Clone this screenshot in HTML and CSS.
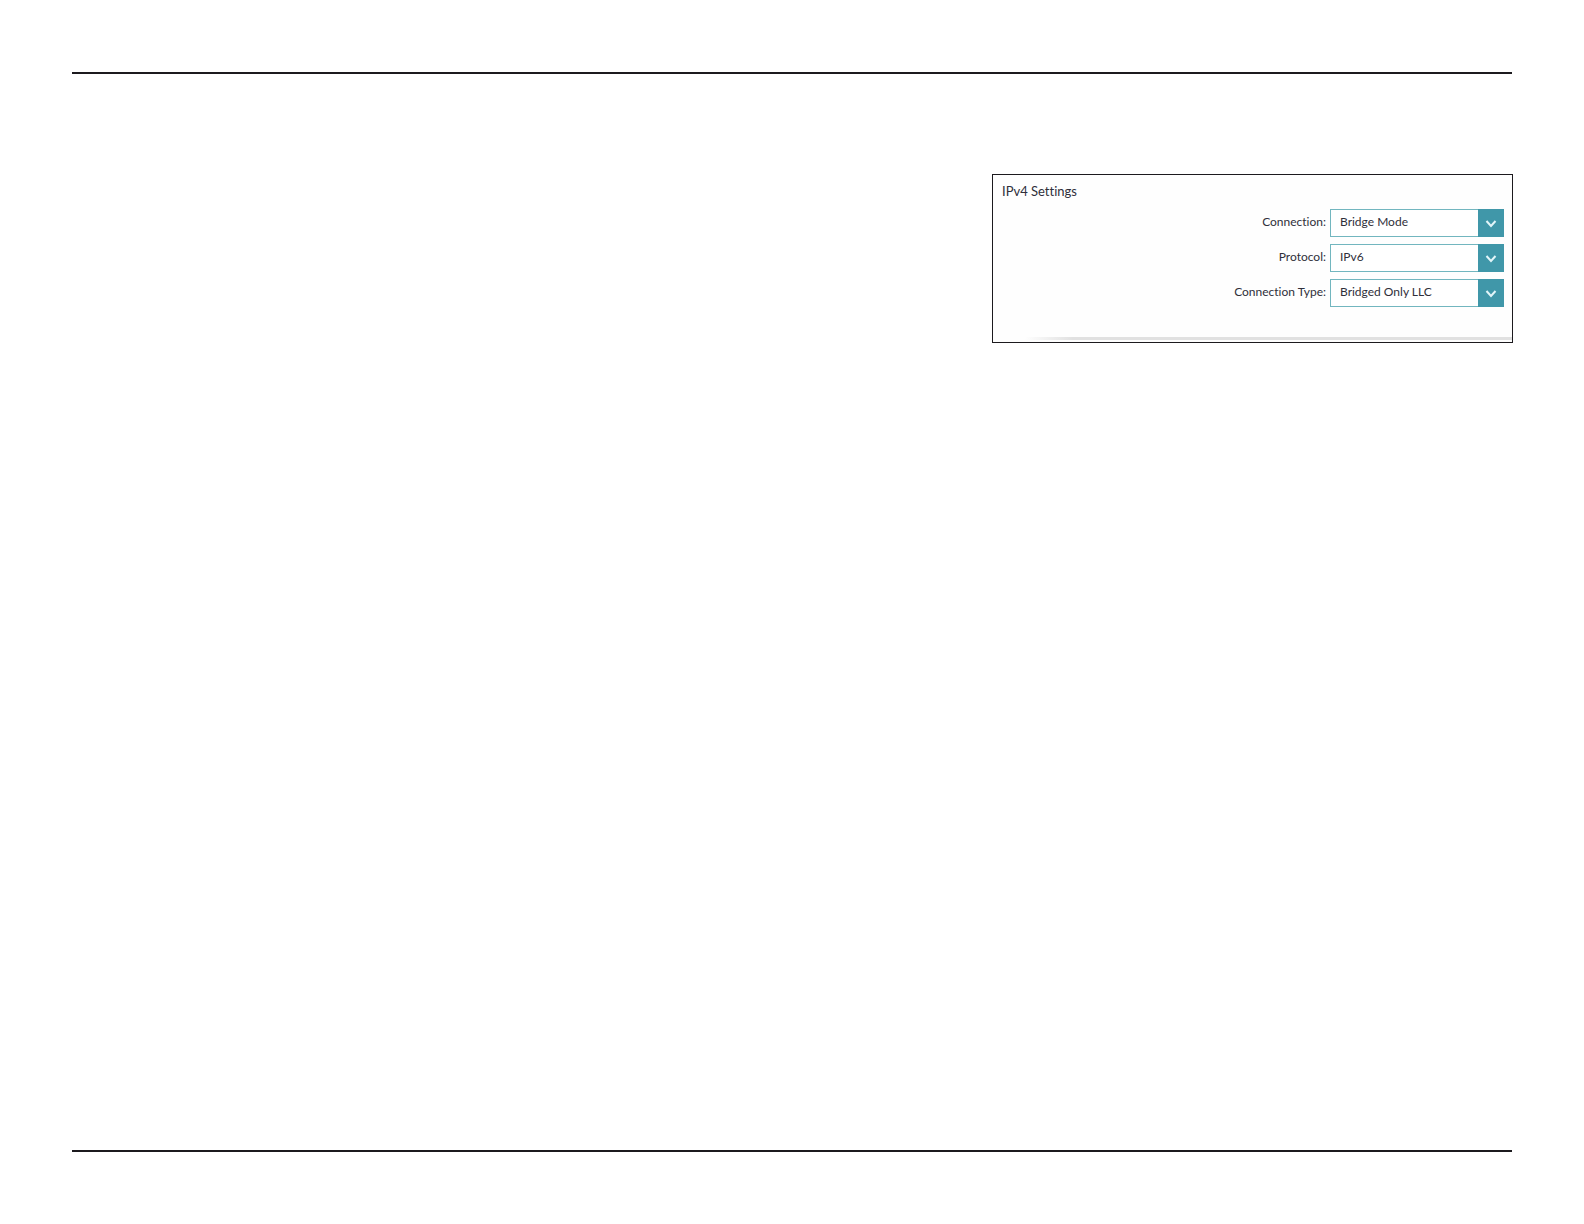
FILE: index.html
```html
<!DOCTYPE html>
<html lang="en">

<head>
    <meta charset="UTF-8">
    <meta name="viewport" content="width=device-width, initial-scale=1.0">
    <title>IPv4 Settings</title>
    <link rel="stylesheet" href="styles.css">
</head>

<body>
    <main class="page">
        <form class="panel">
            <h1 class="panel-title">IPv4 Settings</h1>
            <div class="fields">
                <div class="field">
                    <label for="connection">Connection:</label>
                    <div class="dropdown">
                        <select id="connection">
                            <option>Bridge Mode</option>
                        </select>
                        <svg class="arrow" viewBox="0 0 26 28"><path d="M8.5 12 L13 17 L17.5 12" /></svg>
                    </div>
                </div>
                <div class="field">
                    <label for="protocol">Protocol:</label>
                    <div class="dropdown">
                        <select id="protocol">
                            <option>IPv6</option>
                        </select>
                        <svg class="arrow" viewBox="0 0 26 28"><path d="M8.5 12 L13 17 L17.5 12" /></svg>
                    </div>
                </div>
                <div class="field">
                    <label for="type">Connection Type:</label>
                    <div class="dropdown">
                        <select id="type">
                            <option>Bridged Only LLC</option>
                        </select>
                        <svg class="arrow" viewBox="0 0 26 28"><path d="M8.5 12 L13 17 L17.5 12" /></svg>
                    </div>
                </div>
            </div>
            <div class="divider"></div>
        </form>
    </main>
</body>

</html>
```
FILE: styles.css
```css
* {
    box-sizing: border-box;
}

body {
    margin: 0;
    padding: 72px;
    min-height: 100vh;
    display: flex;
    background-color: white;
    color: #2f2f3a;
    font-family: Lato, "Open Sans", sans-serif;
    font-variant-ligatures: none;
}

/* page frame, ruled at the top and bottom */
.page {
    flex: 1;
    display: flex;
    flex-direction: column;
    align-items: flex-end;
    padding-top: 100px;
    border-top: 2px solid #1c1a1e;
    border-bottom: 2px solid #1c1a1e;
}

.panel {
    width: 521px;
    max-width: 100%;
    margin-right: -1px;
    padding-bottom: 2px;
    border: 1px solid #1c1a1e;
    background-color: #fefefe;
}

.panel-title {
    margin: 0;
    padding: 6px 9px 8px;
    font-size: 13px;
    font-weight: 400;
    line-height: 20px;
}

.fields {
    display: flex;
    flex-direction: column;
    gap: 7px;
    padding-right: 8px;
}

.field {
    display: flex;
    justify-content: flex-end;
    gap: 4px;
    font-size: 12px;
}

.field label {
    line-height: 26px;
}

.dropdown {
    position: relative;
    width: 174px;
    height: 28px;
}

.dropdown select {
    appearance: none;
    width: 100%;
    height: 100%;
    margin: 0;
    padding: 0 30px 3px 9px;
    border: 1px solid #72b6bf;
    border-radius: 0;
    background-color: white;
    color: #2f2f3a;
    font-family: inherit;
    font-size: 12px;
}

.arrow {
    position: absolute;
    top: 0;
    right: 0;
    width: 26px;
    height: 28px;
    background-color: #4097a9;
    pointer-events: none;
}

.arrow path {
    fill: none;
    stroke: #e2f5f9;
    stroke-width: 2;
}

.divider {
    height: 3px;
    margin-top: 30px;
    background: linear-gradient(to right, transparent 32px, #e1e1e1 80px);
}
```
